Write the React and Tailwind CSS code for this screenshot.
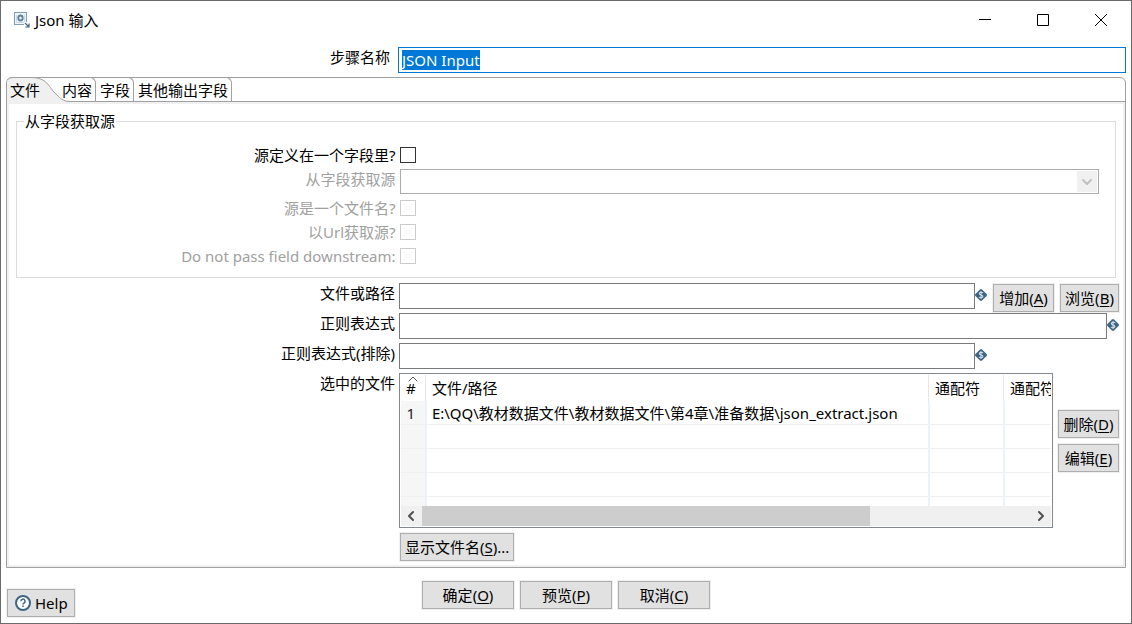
import { useEffect, useRef } from "react";
import clsx from "clsx";
import { ChevronDown, ChevronLeft, ChevronRight, ChevronUp } from "lucide-react";

const tabs = ["内容", "字段", "其他输出字段"];

const sourceFlags = [
  { id: "is-file", label: "源是一个文件名?" },
  { id: "is-url", label: "以Url获取源?" },
  { id: "no-pass", label: "Do not pass field downstream:" },
];

const emptyRows = [2, 3, 4, 5];

function StepIcon() {
  return (
    <svg width="16" height="16" viewBox="0 0 16 16" fill="none">
      <rect x="0.5" y="0.5" width="12" height="12" fill="#eef4f8" stroke="#7f9db5" />
      <ellipse cx="6.5" cy="6" rx="2.2" ry="2.5" stroke="#5d7f99" strokeWidth="1.8" />
      <path d="M2.5 3v7M10.5 3v7M2.5 10.5h8" stroke="#c9d9e4" />
      <rect x="10" y="10" width="6" height="6" fill="#fff" />
      <path d="M11 11l3.5 3.5M15 11.5V15h-3.5" stroke="#3d6480" strokeWidth="1.2" />
    </svg>
  );
}

function VariableIcon() {
  return (
    <svg width="12" height="12" viewBox="0 0 12 12" className="mt-[6px] shrink-0">
      <path d="M6 0q.6 0 1 .4L11.600 5q.8 1 0 2L7 11.600q-1 .8-2 0L.4 7q-.8-1 0-2L5 .4Q5.400 0 6 0z" fill="#3f6585" />
      <path
        d="M8 4C7.400 3 4.300 2.800 4.300 4.600S7.900 5.800 7.900 7.500 4.700 9 4 8M6 2v8"
        fill="none"
        stroke="#d3dfe8"
        strokeWidth="1.1"
      />
    </svg>
  );
}

function HelpIcon() {
  return (
    <svg width="16" height="16" viewBox="0 0 16 16" fill="none" stroke="#3f6585">
      <circle cx="8" cy="8" r="7" fill="#fff" strokeWidth="2" />
      <path d="M5.900 6.300a2.100 2.100 0 1 1 3.200 1.700c-.7.4-1.100.7-1.100 1.500M8 10.600v1.500" strokeWidth="1.500" />
    </svg>
  );
}

function Button({ label, accessKey, suffix = "", className }) {
  return (
    <button
      type="button"
      accessKey={accessKey}
      className={clsx(
        "h-7 shrink-0 border border-[#adadad] bg-[#e1e1e1] whitespace-nowrap ring-1 ring-[#f0f0f0]",
        className,
      )}
    >
      {label}(<u className="underline-offset-2">{accessKey}</u>){suffix}
    </button>
  );
}

function Label({ htmlFor, disabled, className = "pr-1", children }) {
  return (
    <label
      htmlFor={htmlFor}
      className={clsx("w-[35%] shrink-0 text-right", disabled && "text-[#a0a0a0]", className)}
    >
      {children}
    </label>
  );
}

function Checkbox({ id, disabled }) {
  return (
    <input
      id={id}
      type="checkbox"
      disabled={disabled}
      className="h-4 w-4 appearance-none border border-[#333] bg-white disabled:border-[#ccc]"
    />
  );
}

function VariableInput({ id }) {
  return (
    <>
      <input id={id} type="text" className="h-[26px] min-w-0 flex-1 border border-[#7a7a7a] px-1 outline-none" />
      <VariableIcon />
    </>
  );
}

function TitleBar() {
  return (
    <header className="flex h-[38px] items-center pr-px pl-[13px]">
      <StepIcon />
      <h1 className="ml-[5px] flex-1">Json 输入</h1>
      <button type="button" aria-label="Minimize" className="flex w-[58px] justify-center">
        <svg width="12" height="12" stroke="#000"><path d="M0 5.500h12" /></svg>
      </button>
      <button type="button" aria-label="Maximize" className="flex w-[58px] justify-center">
        <svg width="12" height="12" stroke="#000" fill="none"><path d="M.5.5h11v11H.5z" /></svg>
      </button>
      <button type="button" aria-label="Close" className="flex w-[58px] justify-center">
        <svg width="12" height="12" stroke="#000"><path d="M0 0l12 12M12 0L0 12" /></svg>
      </button>
    </header>
  );
}

function TabStrip() {
  return (
    <div role="tablist" className="flex h-6 border-b border-[#a0a0a0]">
      <button type="button" role="tab" aria-selected="true" className="relative z-10 w-[51px] pl-[3px] text-left">
        <svg width="64" height="25" fill="none" className="pointer-events-none absolute -top-px left-0">
          <path
            d="M0 25V6Q0 .5 6 .5H24C40 .5 42 10 47 15C53 21 55 24.500 63 24.500V25z"
            fill="#f0f0f0"
          />
          <path d="M0 3Q2 .5 6 .5H24C40 .5 42 10 47 15C53 21 55 24.500 64 24.500" stroke="#a0a0a0" />
        </svg>
        <span className="relative">文件</span>
      </button>
      {tabs.map((tab) => (
        <button
          key={tab}
          type="button"
          role="tab"
          aria-selected="false"
          className="-mt-px rounded-tr-[6px] border-t border-r border-[#a0a0a0] pr-[3px] pl-1"
        >
          {tab}
        </button>
      ))}
    </div>
  );
}

function SourceGroup() {
  return (
    <fieldset className="mx-[7px] border border-[#dcdcdc] pt-[14px] pr-4 pb-[11px] pl-[6px]">
      <legend className="ml-[1px] px-[1px]">从字段获取源</legend>
      <div className="flex flex-col gap-1">
        <div className="flex h-5 items-center">
          <Label htmlFor="in-field">源定义在一个字段里?</Label>
          <Checkbox id="in-field" />
        </div>
        <div className="flex">
          <Label htmlFor="source-field" disabled>从字段获取源</Label>
          <div className="relative flex-1">
            <select
              id="source-field"
              disabled
              className="block h-[25px] w-full appearance-none border border-[#acacac] bg-white opacity-100"
            />
            <span className="pointer-events-none absolute inset-y-[2px] right-[2px] flex w-5 items-center justify-center bg-[#f0f0f0]">
              <ChevronDown size={16} strokeWidth={3} className="text-[#bfbfbf]" />
            </span>
          </div>
        </div>
        {sourceFlags.map((flag) => (
          <div key={flag.id} className="flex h-5 items-center">
            <Label htmlFor={flag.id} disabled>{flag.label}</Label>
            <Checkbox id={flag.id} disabled />
          </div>
        ))}
      </div>
    </fieldset>
  );
}

function FileTable() {
  const head = "border-r border-[#e5e5e5] pl-[6px] text-left font-normal";
  const cell = "border-r border-b border-l border-r-[#ecf2fb] border-b-[#f0f0f0] border-l-[#ecf2fb] pl-[5px]";
  const index = "border-r border-b border-r-[#ecf2fb] border-b-[#f0f0f0] bg-[#f6f6f6] pr-1 text-center text-[#222]";

  return (
    <div className="min-w-0 flex-1 border border-[#828790] p-px">
      <div className="h-[131px] overflow-hidden">
        <table className="w-full table-fixed border-separate border-spacing-0 whitespace-nowrap">
          <colgroup>
            <col className="w-[25px]" />
            <col />
            <col className="w-[75px]" />
            <col className="w-[47px]" />
          </colgroup>
          <thead>
            <tr className="h-[26px]">
              <th className="relative border-r border-[#e5e5e5] pr-1 font-normal">
                <ChevronUp size={16} strokeWidth={1.5} className="absolute -top-1 left-1 text-[#555]" />
                #
              </th>
              <th className={head}>文件/路径</th>
              <th className={head}>通配符</th>
              <th className="overflow-hidden pl-[6px] text-left font-normal text-clip">通配符</th>
            </tr>
          </thead>
          <tbody>
            <tr className="h-6">
              <td className={index}>1</td>
              <td className={cell}>E:\QQ\教材数据文件\教材数据文件\第4章\准备数据\json_extract.json</td>
              <td className={cell} />
              <td className="border-b border-l border-b-[#f0f0f0] border-l-[#ecf2fb]" />
            </tr>
            {emptyRows.map((row) => (
              <tr key={row} className="h-6">
                <td className={index} />
                <td className={cell} />
                <td className={cell} />
                <td className="border-b border-l border-b-[#f0f0f0] border-l-[#ecf2fb]" />
              </tr>
            ))}
          </tbody>
        </table>
      </div>
      <div className="flex h-5 items-center bg-[#f0f0f0]">
        <button type="button" aria-label="Scroll left" className="flex w-[21px] justify-center text-[#505050]">
          <ChevronLeft size={16} strokeWidth={3} />
        </button>
        <div className="h-full flex-1">
          <div className="h-full w-14/19 bg-[#cdcdcd]" />
        </div>
        <button type="button" aria-label="Scroll right" className="flex w-[21px] justify-center text-[#505050]">
          <ChevronRight size={16} strokeWidth={3} />
        </button>
      </div>
    </div>
  );
}

export default function App() {
  const nameRef = useRef(null);

  useEffect(() => {
    nameRef.current.focus();
    nameRef.current.select();
  }, []);

  return (
    <div className="flex min-h-screen flex-col border border-[#6b6b6b] bg-white font-['Noto_Sans','Noto_Sans_CJK_SC',sans-serif] text-[15px] leading-5 text-black">
      <TitleBar />

      <main className="flex flex-1 flex-col px-[5px] pt-2">
        <div className="flex">
          <Label htmlFor="step-name" className="pr-2">步骤名称</Label>
          <input
            id="step-name"
            ref={nameRef}
            type="text"
            defaultValue="JSON Input"
            className="h-[26px] min-w-0 flex-1 border border-[#0078d7] px-[3px] outline-none selection:bg-[#0078d7] selection:text-white"
          />
        </div>

        <div className="mt-1 flex flex-1 flex-col rounded-t-[6px] border border-[#a0a0a0]">
          <TabStrip />
          <div role="tabpanel" className="flex-1 border-2 border-[#f0f0f0] pt-[7px] pb-1">
            <SourceGroup />
            <div className="mt-[5px] flex flex-col gap-1">
              <div className="flex h-[26px]">
                <Label htmlFor="path">文件或路径</Label>
                <div className="flex flex-1 pr-1">
                  <VariableInput id="path" />
                  <Button label="增加" accessKey="A" className="mt-px ml-[6px] w-[61px]" />
                  <Button label="浏览" accessKey="B" className="mt-px ml-[6px] w-[59px]" />
                </div>
              </div>
              <div className="flex">
                <Label htmlFor="mask">正则表达式</Label>
                <div className="flex flex-1 pr-1">
                  <VariableInput id="mask" />
                </div>
              </div>
              <div className="flex">
                <Label htmlFor="exclude">正则表达式(排除)</Label>
                <div className="flex flex-1 pr-[136px]">
                  <VariableInput id="exclude" />
                </div>
              </div>
              <div className="flex">
                <span className="w-[35%] shrink-0 pr-1 text-right">选中的文件</span>
                <div className="flex min-w-0 flex-1 gap-[5px] pr-1">
                  <FileTable />
                  <div className="flex flex-col gap-[6px] pt-[37px]">
                    <Button label="删除" accessKey="D" className="w-[61px]" />
                    <Button label="编辑" accessKey="E" className="w-[61px]" />
                  </div>
                </div>
              </div>
            </div>
            <div className="mt-[5px] flex pl-[35%]">
              <Button label="显示文件名" accessKey="S" suffix="..." className="ml-px px-1" />
            </div>
          </div>
        </div>
      </main>

      <footer className="grid grid-cols-[1fr_auto_1fr] items-start px-[6px] pt-[13px] pb-[6px]">
        <button
          type="button"
          className="mt-2 flex h-7 items-center gap-1 justify-self-start border border-[#adadad] bg-[#e1e1e1] pr-[6px] pl-[7px] ring-1 ring-[#f0f0f0]"
        >
          <HelpIcon />
          Help
        </button>
        <div className="flex gap-[6px]">
          <Button label="确定" accessKey="O" className="w-[92px]" />
          <Button label="预览" accessKey="P" className="w-[92px]" />
          <Button label="取消" accessKey="C" className="w-[92px]" />
        </div>
      </footer>
    </div>
  );
}
